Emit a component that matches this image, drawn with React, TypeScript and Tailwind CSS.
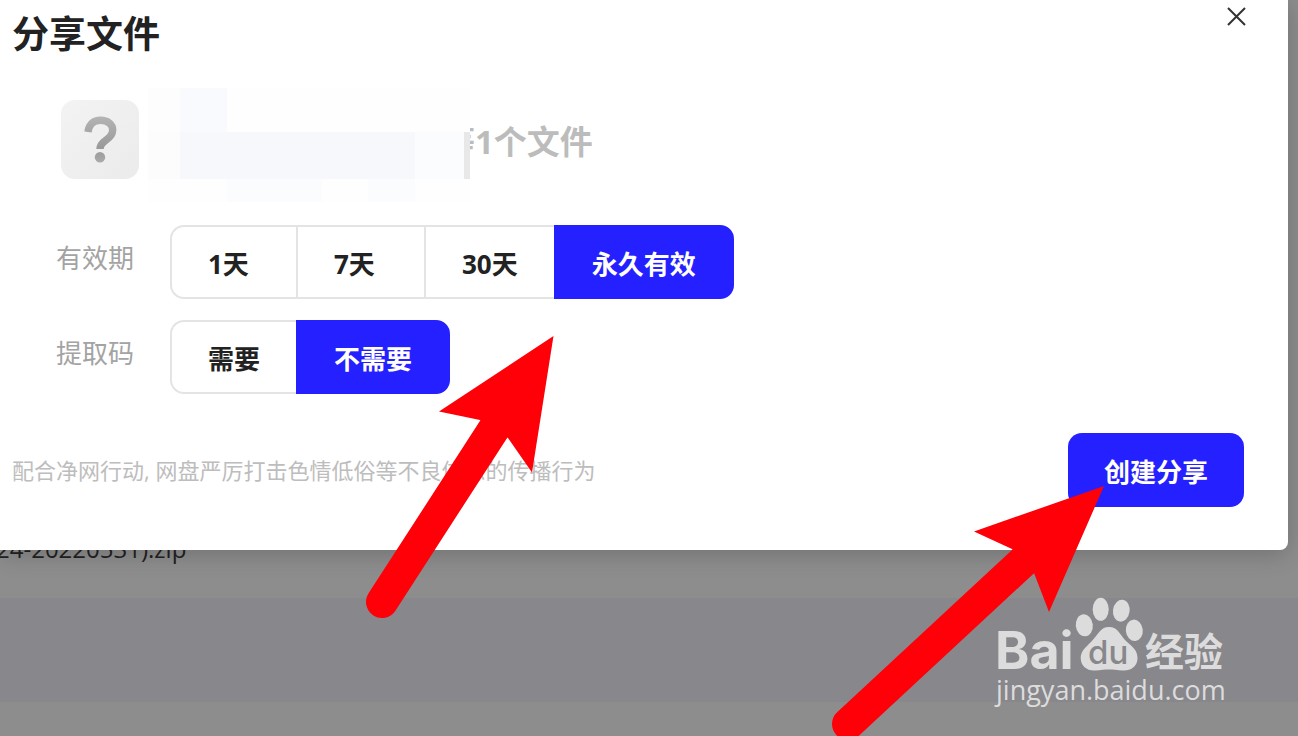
import { useState } from "react";

const periods = [
  { value: "1", label: "1天" },
  { value: "7", label: "7天" },
  { value: "30", label: "30天" },
  { value: "forever", label: "永久有效" },
];

const codes = [
  { value: "yes", label: "需要" },
  { value: "no", label: "不需要" },
];

// blurred file name, one colour per block, row by row
const mosaic = [
  "bg-[#fdfdfd]", "bg-[#f9fafd]", "bg-[#fefefe]", "bg-[#fefefe]", "bg-[#fefefe]", "bg-[#fefefe]", "bg-[#fefefe]",
  "bg-[#fcfcfd]", "bg-[#f7f8fc]", "bg-[#f7f8fc]", "bg-[#f7f8fc]", "bg-[#f7f8fc]", "bg-[#fbfcfe]", "bg-[#e8e8e8]",
  "bg-[#fefefe]", "bg-[#fefefe]", "bg-[#fbfcfe]", "bg-[#fefefe]", "bg-[#fbfcfe]", "bg-[#fefefe]", "bg-[#fefefe]",
];

type Option = { value: string; label: string };

type OptionGroupProps = {
  name: string;
  title: string;
  options: Option[];
  value: string;
  onChange: (value: string) => void;
};

function OptionGroup({ name, title, options, value, onChange }: OptionGroupProps) {
  return (
    <div role="radiogroup" aria-labelledby={`${name}-title`} className="flex items-start">
      <span id={`${name}-title`} className="w-[114px] shrink-0 text-[26px] leading-[66px] text-[#a3a3a3]">
        {title}
      </span>
      <div className="flex h-[74px]">
        {options.map((o) => (
          <label
            key={o.value}
            className="relative flex min-w-[128px] cursor-pointer items-center border-y-2 border-l-2 border-[#e4e4e4] pt-1 pr-9 pl-9 text-[26px] font-bold text-[#222] first:min-w-[126px] first:rounded-l-[14px] last:rounded-r-[14px] last:border-r-2 has-checked:border-[#2420ff] has-checked:bg-[#2420ff] has-checked:text-white"
          >
            <input
              type="radio"
              name={name}
              value={o.value}
              checked={value === o.value}
              onChange={() => onChange(o.value)}
              className="sr-only"
            />
            {o.label}
          </label>
        ))}
      </div>
    </div>
  );
}

function UnknownFileIcon() {
  return (
    <svg width="78" height="79" viewBox="0 0 78 79" fill="none" className="shrink-0" aria-hidden="true">
      <defs>
        <linearGradient id="tile" x1="0" y1="0" x2="1" y2="1">
          <stop offset="0" stopColor="#f3f3f3" />
          <stop offset="1" stopColor="#ebebeb" />
        </linearGradient>
        <linearGradient id="mark" x1="0" y1="16" x2="0" y2="63" gradientUnits="userSpaceOnUse">
          <stop offset="0" stopColor="#b4b4b4" />
          <stop offset="0.7" stopColor="#999" />
          <stop offset="1" stopColor="#ababab" />
        </linearGradient>
      </defs>
      <rect width="78" height="79" rx="14" fill="url(#tile)" />
      <path
        d="M27 32C28 24 33 20.3 39.5 20.3C47 20.3 51.7 24.5 51.7 30C51.7 35 48.5 37.8 44.5 40.5C41 43 39 45 39 49"
        stroke="url(#mark)"
        strokeWidth="7.4"
      />
      <circle cx="39" cy="57.3" r="5.2" fill="url(#mark)" />
    </svg>
  );
}

function BaiduLogo() {
  return (
    <svg width="232" height="78" viewBox="0 0 232 78" fill="#dcdcdc" className="block overflow-visible" role="img" aria-label="Baidu 经验">
      <text x="-1" y="73" fontSize="52" fontWeight="700" fontFamily="Inter, sans-serif">Bai</text>
      <ellipse cx="88.3" cy="29.3" rx="8.5" ry="11" transform="rotate(-6 88.3 29.3)" />
      <ellipse cx="104.7" cy="13.3" rx="8" ry="11.5" />
      <ellipse cx="125.3" cy="14.7" rx="8.3" ry="11" transform="rotate(8 125.3 14.7)" />
      <ellipse cx="138.3" cy="34.3" rx="8.5" ry="10.7" transform="rotate(-6 138.3 34.3)" />
      <path d="M113 31C122 31 124 39 130 45C137 51 142 55 141.5 63C141 71 134 75 127 74.5C121 74 117 73.5 113 73.5C109 73.5 105 74 99 74.5C91 75 85 70 84.7 62.5C84.5 55 90 51 95 46C102 39 104 31 113 31Z" />
      <text x="92" y="68" fontSize="33" fontWeight="500" fontFamily="Inter, sans-serif" fill="#88878c">du</text>
      <text x="149" y="70" fontSize="39" fontWeight="700" fontFamily="'Noto Sans CJK SC', sans-serif">经验</text>
    </svg>
  );
}

export default function App() {
  const [period, setPeriod] = useState("forever");
  const [code, setCode] = useState("no");

  return (
    <div className="relative flex min-h-screen flex-col overflow-hidden bg-[#8d8d8d] font-['Open_Sans','Noto_Sans_CJK_SC',sans-serif]">
      <section
        role="dialog"
        aria-labelledby="share-title"
        className="relative z-10 mr-[10px] rounded-br-lg bg-white pb-[43px] shadow-[0_4px_24px_rgba(0,0,0,0.2)]"
      >
        <header className="flex items-start justify-between pt-2 pr-[42px] pl-3">
          <h1 id="share-title" className="text-[37px] leading-[52px] font-bold text-[#222]">分享文件</h1>
          <button type="button" aria-label="关闭" className="-mt-px cursor-pointer">
            <svg width="19" height="19" viewBox="0 0 19 19" stroke="#333" strokeWidth="2" fill="none">
              <path d="M1 1L18 18M18 1L1 18" />
            </svg>
          </button>
        </header>

        <div className="mt-7 flex items-start pl-[61px]">
          <div className="pt-3">
            <UnknownFileIcon />
          </div>
          <div
            aria-hidden="true"
            className="relative z-10 ml-[9px] grid grid-cols-[32px_47px_95px_46px_47px_49px_6px] grid-rows-[44px_47px_23px]"
          >
            {mosaic.map((c, i) => (
              <span key={i} className={c} />
            ))}
          </div>
          <p className="-ml-7 pt-7 text-[33px] leading-[52px] font-bold text-[#bcbcbc]">等1个文件</p>
        </div>

        <div className="mt-[23px] flex flex-col gap-[21px] pl-14">
          <OptionGroup name="period" title="有效期" options={periods} value={period} onChange={setPeriod} />
          <OptionGroup name="code" title="提取码" options={codes} value={code} onChange={setCode} />
        </div>

        <footer className="mt-[39px] flex items-center justify-between pr-11 pl-3">
          <p className="text-[22px] text-[#bdbdbd]">配合净网行动, 网盘严厉打击色情低俗等不良信息的传播行为</p>
          <button
            type="button"
            className="h-[74px] cursor-pointer rounded-[14px] bg-[#2420ff] px-9 pt-1 text-[26px] font-bold text-white"
          >
            创建分享
          </button>
        </footer>
      </section>

      {/* file list behind the dialog */}
      <div className="-mt-[13px] -ml-1 h-[61px] text-2xl leading-6 text-[#222]">24-20220531).zip</div>
      <div className="h-[104px] bg-[#88878c]" />

      <svg
        width="188"
        height="283"
        viewBox="366 336 188 283"
        fill="#ff0008"
        aria-hidden="true"
        className="absolute top-[336px] left-[366px] z-20"
      >
        <path d="M553.5 336L439 411.5L480 420L508 438L532 472.5Z" />
        <path d="M382 602L499 421" stroke="#ff0008" strokeWidth="32" strokeLinecap="round" />
      </svg>
      <svg
        width="272"
        height="250"
        viewBox="832 486 272 250"
        fill="#ff0008"
        aria-hidden="true"
        className="absolute top-[486px] right-[194px] z-20"
      >
        <path d="M1104 486L974 531.5L1012 549L1034 573L1049 612Z" />
        <path d="M848 724L1028 557" stroke="#ff0008" strokeWidth="32" strokeLinecap="round" />
      </svg>

      <div className="absolute top-[596px] right-[70px] z-20 w-[232px] text-[#dcdcdc]">
        <BaiduLogo />
        <p className="text-[27px] leading-8">jingyan.baidu.com</p>
      </div>
    </div>
  );
}
